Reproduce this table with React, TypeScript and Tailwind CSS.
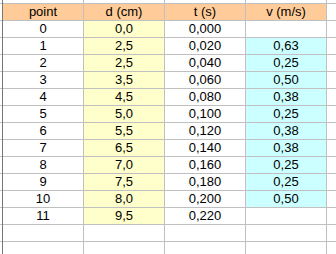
import React from "react";

const rows: [string, string, string, string][] = [
  ["0", "0,0", "0,000", ""],
  ["1", "2,5", "0,020", "0,63"],
  ["2", "2,5", "0,040", "0,25"],
  ["3", "3,5", "0,060", "0,50"],
  ["4", "4,5", "0,080", "0,38"],
  ["5", "5,0", "0,100", "0,25"],
  ["6", "5,5", "0,120", "0,38"],
  ["7", "6,5", "0,140", "0,38"],
  ["8", "7,0", "0,160", "0,25"],
  ["9", "7,5", "0,180", "0,25"],
  ["10", "8,0", "0,200", "0,50"],
  ["11", "9,5", "0,220", ""],
];

const heights = ["h-[4px]", "h-[17px]", ...rows.map(() => "h-[17px]"), "h-[17px]", "h-[12px]"];

function Cell({ children, bg }: { children?: React.ReactNode; bg: string }) {
  return (
    <div className={`w-[81px] shrink-0 h-full border-r border-[#c0c0c0] ${bg} flex items-center justify-center leading-[16px]`}>
      {children}
    </div>
  );
}

export default function App() {
  return (
    <div
      className="w-[336px] h-[254px] overflow-hidden bg-white flex text-[13px] text-black"
      style={{ fontFamily: '"Liberation Sans", Arial, sans-serif' }}
    >
      <div className="w-[2px] shrink-0 flex flex-col">
        {heights.map((h, i) => (
          <div key={i} className={`${h} shrink-0 ${i === heights.length - 1 ? "" : "border-b border-[#c0c0c0]"}`} />
        ))}
      </div>
      <div className="w-[1px] shrink-0 h-full bg-[#77776b]" />
      <div className="flex-1 flex flex-col">
        <div className="h-[4px] shrink-0 border-b border-[#c0c0c0] flex">
          <Cell bg="" />
          <Cell bg="" />
          <Cell bg="" />
          <Cell bg="" />
        </div>
        <div className="h-[17px] shrink-0 border-b border-[#c0c0c0] flex">
          <Cell bg="bg-[#ffcc99]">point</Cell>
          <Cell bg="bg-[#ffcc99]">d (cm)</Cell>
          <Cell bg="bg-[#ffcc99]">t (s)</Cell>
          <Cell bg="bg-[#ffcc99]">v (m/s)</Cell>
        </div>
        {rows.map((r, i) => (
          <div key={i} className="h-[17px] shrink-0 border-b border-[#c0c0c0] flex">
            <Cell bg="">{r[0]}</Cell>
            <Cell bg="bg-[#ffffcc]">{r[1]}</Cell>
            <Cell bg="">{r[2]}</Cell>
            <Cell bg={r[3] ? "bg-[#ccffff]" : ""}>{r[3]}</Cell>
          </div>
        ))}
        <div className="h-[17px] shrink-0 border-b border-[#c0c0c0] flex">
          <Cell bg="" />
          <Cell bg="" />
          <Cell bg="" />
          <Cell bg="" />
        </div>
        <div className="h-[12px] shrink-0 flex">
          <Cell bg="" />
          <Cell bg="" />
          <Cell bg="" />
          <Cell bg="" />
        </div>
      </div>
    </div>
  );
}
